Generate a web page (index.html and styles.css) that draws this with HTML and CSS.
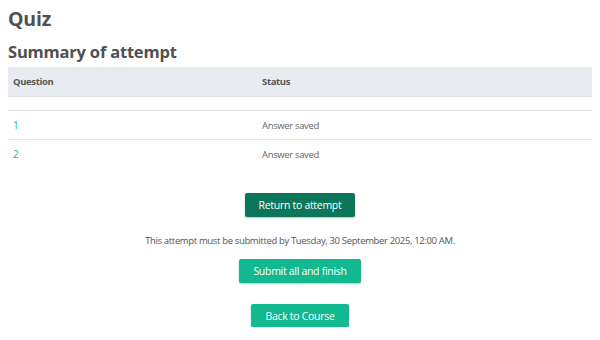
FILE: index.html
```html
<!DOCTYPE html>
<html>
<head>
<meta charset="utf-8">
<link rel="stylesheet" href="styles.css">
</head>
<body>
<div class="page">
  <h1 class="title">Quiz</h1>
  <h2 class="subtitle">Summary of attempt</h2>
  <table class="summary">
    <thead>
      <tr><th class="col-q">Question</th><th>Status</th></tr>
    </thead>
    <tbody>
      <tr class="spacer"><td></td><td></td></tr>
      <tr class="row"><td class="qcell"><span class="qlink">1</span></td><td>Answer saved</td></tr>
      <tr class="row"><td class="qcell"><span class="qlink">2</span></td><td>Answer saved</td></tr>
    </tbody>
  </table>
  <div class="actions">
    <button class="btn btn-dark">Return to attempt</button>
    <p class="note">This attempt must be submitted by Tuesday, 30 September 2025, 12:00 AM.</p>
    <button class="btn btn-light">Submit all and finish</button>
    <button class="btn btn-light btn-back">Back to Course</button>
  </div>
</div>
</body>
</html>
```

FILE: styles.css
```css
html, body {
  margin: 0;
  padding: 0;
  background: #fff;
}
body {
  font-family: "Open Sans", "DejaVu Sans", sans-serif;
  color: #555;
}
.page {
  padding: 0 8px;
}
.title {
  margin: 0;
  padding-top: 5px;
  font-size: 19.5px;
  line-height: 27px;
  font-weight: 700;
  color: #505050;
  letter-spacing: -0.2px;
}
.subtitle {
  margin: 8px 0 0 0;
  font-size: 16.5px;
  line-height: 23px;
  font-weight: 700;
  color: #505050;
  letter-spacing: -0.2px;
}
.summary {
  margin-top: 4px;
  width: 100%;
  border-collapse: collapse;
  font-size: 9.5px;
  letter-spacing: -0.35px;
}
.summary th {
  background: #e8ecf0;
  text-align: left;
  font-weight: 700;
  color: #555;
  height: 29px;
  padding: 0 5px;
  border-bottom: 1px solid #dfe3e8;
}
.summary .col-q {
  width: 239px;
}
.spacer td {
  height: 13px;
  padding: 0;
}
.row td {
  height: 28px;
  padding: 0 5px;
  border-top: 1px solid #e6e6e6;
  color: #666;
}
.row td.qcell {
  color: #14b891;
}
.qlink {
  color: #14b891;
  font-size: 10px;
  cursor: pointer;
}
.actions {
  display: flex;
  flex-direction: column;
  align-items: center;
  margin-top: 25px;
}
.btn {
  font-family: "Open Sans", "DejaVu Sans", sans-serif;
  font-size: 10.5px;
  letter-spacing: -0.3px;
  color: #fff;
  border: none;
  border-radius: 2px;
  height: 24px;
  padding: 0 14px;
  box-shadow: 0 1px 2px rgba(0,0,0,0.25);
}
.btn-dark {
  background: #0b7659;
}
.btn-light {
  background: #12b88f;
}
.note {
  margin: 17px 0 11px 0;
  font-size: 9.5px;
  letter-spacing: -0.35px;
  line-height: 14px;
  color: #555;
}
.btn-back {
  margin-top: 21px;
  height: 23px;
}
```
